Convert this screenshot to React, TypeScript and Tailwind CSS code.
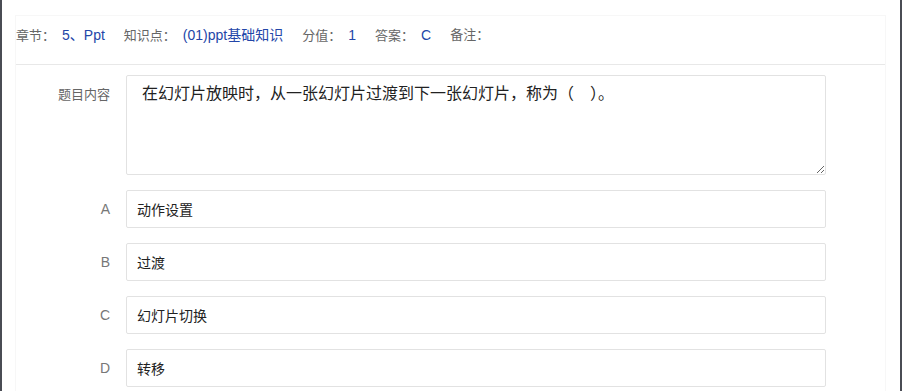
import React from "react";

const info = [
  { label: "章节：", value: "5、Ppt" },
  { label: "知识点：", value: "(01)ppt基础知识" },
  { label: "分值：", value: "1" },
  { label: "答案：", value: "C" },
  { label: "备注：", value: "" },
];

const options = [
  { key: "A", text: "动作设置" },
  { key: "B", text: "过渡" },
  { key: "C", text: "幻灯片切换" },
  { key: "D", text: "转移" },
];

const App = () => {
  return (
    <div
      className="flex h-[391px] w-[902px] overflow-hidden bg-white"
      style={{ fontFamily: '"Liberation Sans", "Noto Sans CJK SC", sans-serif' }}
    >
      <div className="w-[2px] bg-[#4a4c54]" />
      <div className="flex-1 pl-[13px] pr-[14px] pt-[15px]">
        <div className="h-full border border-b-0 border-[#f7f7f7]">
          <div className="flex h-[48px] items-start gap-[19px] pt-[9px] leading-[20px]">
            {info.map((item, i) => (
              <div key={i} className="flex items-baseline gap-[7px]">
                <span className="text-[13px] text-[#666]">{item.label}</span>
                {item.value && <span className="text-[14px] text-[#2346a8]">{item.value}</span>}
              </div>
            ))}
          </div>
          <div className="h-px bg-[#e8e8e8]" />

          <div className="pt-[10px]">
            <div className="flex">
              <div className="w-[94px] pt-[10px] text-right text-[13px] leading-[20px] text-[#666]">
                题目内容
              </div>
              <textarea
                readOnly
                defaultValue="在幻灯片放映时，从一张幻灯片过渡到下一张幻灯片，称为（　）。"
                className="ml-[16px] h-[100px] w-[700px] rounded-[2px] border border-[#e2e2e2] px-[15px] pt-[7px] text-[16px] leading-[22px] text-[#222] outline-none"
              />
            </div>

            {options.map((o) => (
              <div key={o.key} className="mt-[15px] flex items-center">
                <div className="w-[94px] text-right text-[14px] text-[#777]">{o.key}</div>
                <input
                  readOnly
                  defaultValue={o.text}
                  className="ml-[16px] h-[38px] w-[700px] rounded-[2px] border border-[#e2e2e2] px-[10px] text-[14px] text-[#222] outline-none"
                />
              </div>
            ))}
          </div>
        </div>
      </div>
      <div className="w-[2px] bg-[#4a4c54]" />
    </div>
  );
};

export default App;
